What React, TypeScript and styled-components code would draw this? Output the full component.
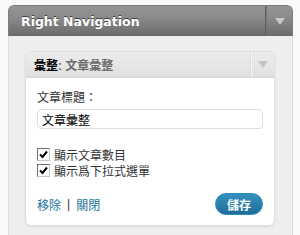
import * as React from "react";
import styled, { createGlobalStyle } from "styled-components";

const GlobalStyle = createGlobalStyle`
  html, body {
    margin: 0;
    padding: 0;
    background: #f9f9f9;
  }
  body {
    font-family: "Liberation Sans", "Noto Sans CJK TC", sans-serif;
    font-size: 12px;
    color: #333;
  }
`;

const CJK = `"Liberation Sans", "Noto Sans CJK TC", sans-serif`;

const Page = styled.div`
  padding: 5px 7px 0 8px;
  height: 235px;
  box-sizing: border-box;
  overflow: hidden;
`;

const Sidebar = styled.div`
  display: flex;
  flex-direction: column;
`;

const SidebarHeader = styled.div`
  display: flex;
  align-items: stretch;
  height: 31px;
  border-radius: 6px 6px 0 0;
  background: linear-gradient(to bottom, #959595 0%, #8a8a8a 40%, #6a6a6a 100%);
  border: 1px solid #7e7e7e;
  border-bottom: none;
  box-sizing: border-box;
`;

const SidebarTitle = styled.h3`
  flex: 1;
  margin: 0;
  padding-left: 12px;
  display: flex;
  align-items: center;
  color: #fff;
  font-family: "DejaVu Sans", Verdana, sans-serif;
  font-weight: bold;
  font-size: 12.5px;
  text-shadow: 0 -1px 0 #3f3f3f;
`;

const Toggle = styled.div<{ $light?: boolean }>`
  width: ${(p) => (p.$light ? 22 : 25)}px;
  display: flex;
  align-items: center;
  justify-content: center;
  border-left: 1px solid ${(p) => (p.$light ? "#f5f5f5" : "#777")};
  box-shadow: ${(p) => (p.$light ? "-1px 0 0 #dcdcdc" : "-1px 0 0 #5e5e5e")};
`;

const Arrow = styled.span<{ $light?: boolean }>`
  width: 0;
  height: 0;
  border-left: 5px solid transparent;
  border-right: 5px solid transparent;
  border-top: 7px solid ${(p) => (p.$light ? "#c4c4c4" : "#c6c6c6")};
`;

const SidebarBody = styled.div`
  flex: 1;
  background: #eeeeee;
  border: 1px solid #dcdcdc;
  border-top: none;
  padding: 15px 17px 20px 16px;
  height: 220px;
`;

const Widget = styled.div`
  border: 1px solid #dfdfdf;
  border-radius: 6px;
  background: #fff;
  box-shadow: 0 1px 2px rgba(0, 0, 0, 0.08);
  overflow: hidden;
`;

const WidgetHeader = styled.div`
  display: flex;
  height: 25px;
  background: linear-gradient(to bottom, #ececec 0%, #e6e6e6 60%, #dedede 100%);
  border-bottom: 1px solid #dadada;
`;

const WidgetTitle = styled.h4`
  flex: 1;
  margin: 0;
  padding-left: 8px;
  display: flex;
  align-items: center;
  font-family: ${CJK};
  font-size: 12px;
  font-weight: bold;
  color: #000;
`;

const InTitle = styled.span`
  color: #6b6b6b;
  font-weight: bold;
  white-space: pre;
`;

const WidgetBody = styled.div`
  padding: 12px 11px 10px 11px;
  display: flex;
  flex-direction: column;
`;

const Label = styled.label`
  font-family: ${CJK};
  font-size: 12px;
  line-height: 16px;
  color: #333;
  margin-bottom: 3px;
`;

const TextInput = styled.input`
  height: 20px;
  box-sizing: border-box;
  border: 1px solid #dfdfdf;
  border-radius: 4px;
  padding: 0 4px;
  font-family: ${CJK};
  font-size: 12px;
  color: #000;
  background: #fff;
  outline: none;
  margin-bottom: 17px;
`;

const CheckRow = styled.label`
  display: flex;
  align-items: center;
  gap: 4px;
  height: 16px;
  font-family: ${CJK};
  font-size: 12px;
  color: #333;
`;

const Box = styled.span`
  width: 11px;
  height: 11px;
  border: 1px solid #6e6e6e;
  border-right-color: #c8c8c8;
  border-bottom-color: #c8c8c8;
  background: #fff;
  display: flex;
  align-items: center;
  justify-content: center;
`;

const Controls = styled.div`
  display: flex;
  align-items: center;
  justify-content: space-between;
  margin-top: 15px;
`;

const Links = styled.div`
  font-family: ${CJK};
  font-size: 12px;
  color: #333;
  display: flex;
  align-items: center;
  gap: 6px;
`;

const Link = styled.a`
  color: #21759b;
  text-decoration: none;
`;

const SaveButton = styled.button`
  width: 48px;
  height: 22px;
  border-radius: 11px;
  border: 1px solid #298cba;
  background: linear-gradient(to bottom, #3590be 0%, #2a80ad 50%, #1f6c95 100%);
  color: #fff;
  font-family: ${CJK};
  font-size: 12px;
  font-weight: bold;
  padding: 0;
  display: flex;
  align-items: center;
  justify-content: center;
`;

const Check = () => (
  <svg width="9" height="9" viewBox="0 0 9 9">
    <path d="M1 4.5 L3.5 7 L8 1.5" fill="none" stroke="#000" strokeWidth="2" />
  </svg>
);

export default function App() {
  return (
    <>
      <GlobalStyle />
      <Page>
        <Sidebar>
          <SidebarHeader>
            <SidebarTitle>Right Navigation</SidebarTitle>
            <Toggle>
              <Arrow />
            </Toggle>
          </SidebarHeader>
          <SidebarBody>
            <Widget>
              <WidgetHeader>
                <WidgetTitle>
                  彙整<InTitle>: 文章彙整</InTitle>
                </WidgetTitle>
                <Toggle $light>
                  <Arrow $light />
                </Toggle>
              </WidgetHeader>
              <WidgetBody>
                <Label>文章標題：</Label>
                <TextInput defaultValue="文章彙整" />
                <CheckRow>
                  <Box>
                    <Check />
                  </Box>
                  顯示文章數目
                </CheckRow>
                <CheckRow>
                  <Box>
                    <Check />
                  </Box>
                  顯示爲下拉式選單
                </CheckRow>
                <Controls>
                  <Links>
                    <Link href="#">移除</Link>|<Link href="#">關閉</Link>
                  </Links>
                  <SaveButton>儲存</SaveButton>
                </Controls>
              </WidgetBody>
            </Widget>
          </SidebarBody>
        </Sidebar>
      </Page>
    </>
  );
}
